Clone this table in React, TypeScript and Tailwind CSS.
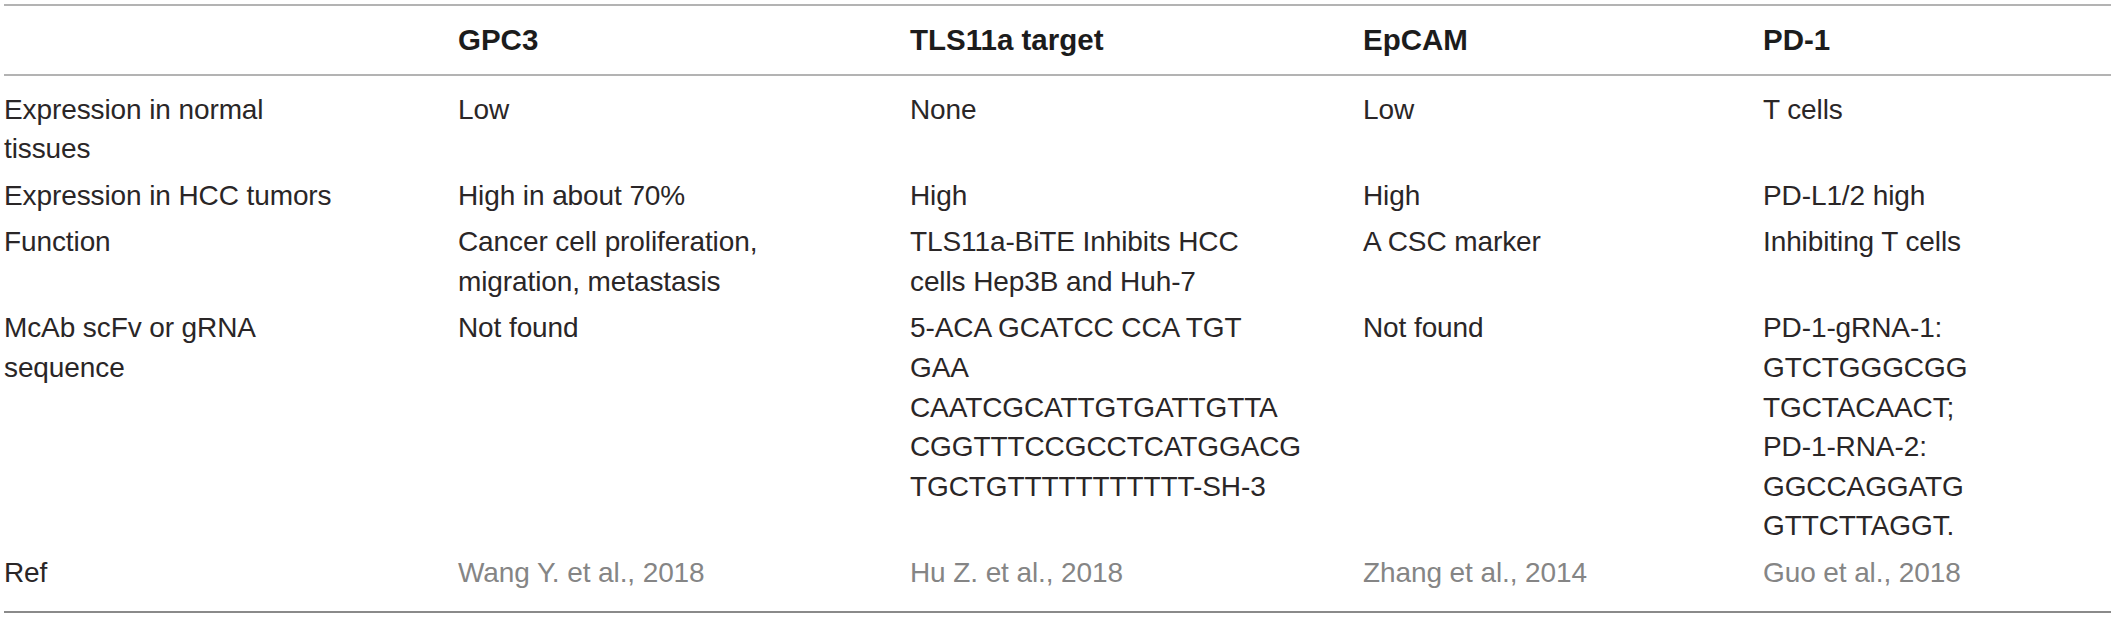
import React from 'react';

// columns measured off the reference: 454 / 452 / 453 / 400 / rest
const cols = 'grid grid-cols-[454px_452px_453px_400px_1fr]';

const header = ['', 'GPC3', 'TLS11a target', 'EpCAM', 'PD-1'];

type Row = { label: string[]; cells: string[][]; muted?: boolean };

const rows: Row[] = [
  {
    label: ['Expression in normal', 'tissues'],
    cells: [['Low'], ['None'], ['Low'], ['T cells']],
  },
  {
    label: ['Expression in HCC tumors'],
    cells: [['High in about 70%'], ['High'], ['High'], ['PD-L1/2 high']],
  },
  {
    label: ['Function'],
    cells: [
      ['Cancer cell proliferation,', 'migration, metastasis'],
      ['TLS11a-BiTE Inhibits HCC', 'cells Hep3B and Huh-7'],
      ['A CSC marker'],
      ['Inhibiting T cells'],
    ],
  },
  {
    label: ['McAb scFv or gRNA', 'sequence'],
    cells: [
      ['Not found'],
      [
        '5-ACA GCATCC CCA TGT',
        'GAA',
        'CAATCGCATTGTGATTGTTA',
        'CGGTTTCCGCCTCATGGACG',
        'TGCTGTTTTTTTTTTT-SH-3',
      ],
      ['Not found'],
      [
        'PD-1-gRNA-1:',
        'GTCTGGGCGG',
        'TGCTACAACT;',
        'PD-1-RNA-2:',
        'GGCCAGGATG',
        'GTTCTTAGGT.',
      ],
    ],
  },
  {
    label: ['Ref'],
    cells: [
      ['Wang Y. et al., 2018'],
      ['Hu Z. et al., 2018'],
      ['Zhang et al., 2014'],
      ['Guo et al., 2018'],
    ],
    muted: true,
  },
];

function Lines({ lines }: { lines: string[] }) {
  return (
    <div>
      {lines.map((l, i) => (
        <div key={i}>{l}</div>
      ))}
    </div>
  );
}

export default function App() {
  return (
    <div className="w-[2117px] h-[619px] bg-white pt-[4px] pl-[4px] pr-[6px] font-['Liberation_Sans',Arial,sans-serif]">
      <div className="border-t-2 border-b-2 border-t-[#b3b3b3] border-b-[#8a8a8a]">
        {/* header */}
        <div
          className={`${cols} h-[70px] items-center border-b-2 border-[#b3b3b3] font-bold text-[29.5px] text-[#1c1c1c]`}
        >
          {header.map((h, i) => (
            <div key={i}>{h}</div>
          ))}
        </div>

        {/* body */}
        <div className="pt-[10px] pb-[15px] text-[28px] tracking-[-0.1px] leading-[39.6px] text-[#2a2627]">
          {rows.map((r, i) => (
            <div key={i} className={`${cols} py-[3.5px]`}>
              <Lines lines={r.label} />
              {r.cells.map((c, j) => (
                <div key={j} className={r.muted ? 'text-[#858585]' : ''}>
                  <Lines lines={c} />
                </div>
              ))}
            </div>
          ))}
        </div>
      </div>
    </div>
  );
}
